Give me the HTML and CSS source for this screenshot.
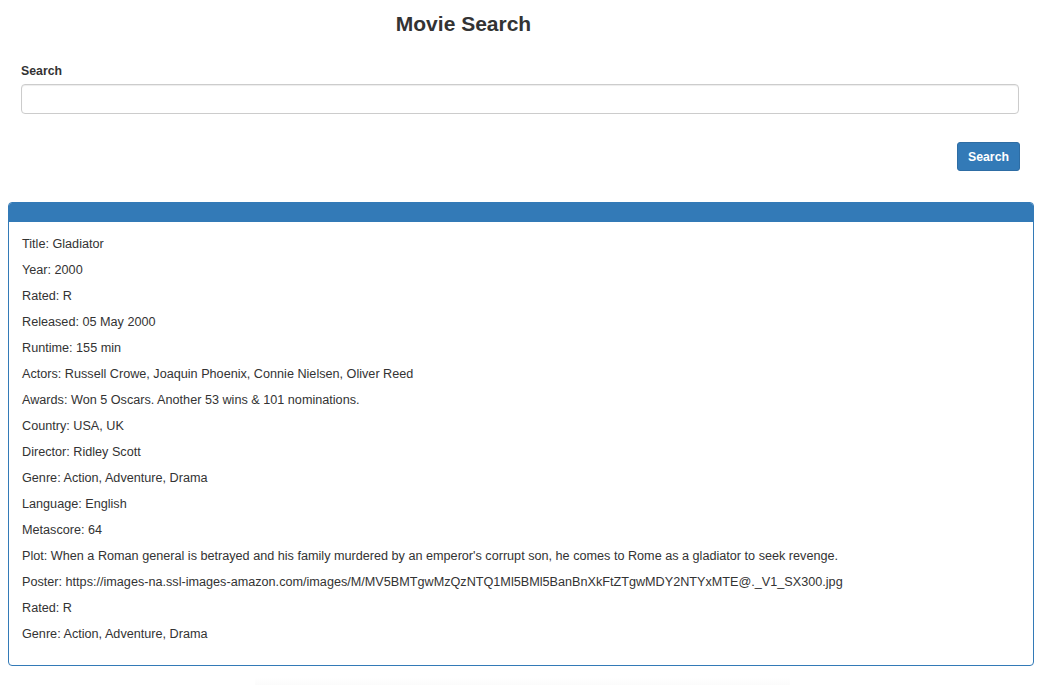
FILE: index.html
```html
<!DOCTYPE html>
<html lang="en">
<head>
<meta charset="utf-8">
<title>Movie Search</title>
<link rel="stylesheet" href="styles.css">
</head>
<body>
<header class="page-header">
  <h1 class="page-title">Movie Search</h1>
</header>
<form class="search-form">
  <label class="search-label" for="q">Search</label>
  <input class="search-input" id="q" type="text">
  <div class="actions">
    <button class="btn-primary" type="button">Search</button>
  </div>
</form>
<section class="panel">
  <div class="panel-heading"></div>
  <div class="panel-body">
    <p>Title: Gladiator</p>
    <p>Year: 2000</p>
    <p>Rated: R</p>
    <p>Released: 05 May 2000</p>
    <p>Runtime: 155 min</p>
    <p>Actors: Russell Crowe, Joaquin Phoenix, Connie Nielsen, Oliver Reed</p>
    <p>Awards: Won 5 Oscars. Another 53 wins &amp; 101 nominations.</p>
    <p>Country: USA, UK</p>
    <p>Director: Ridley Scott</p>
    <p>Genre: Action, Adventure, Drama</p>
    <p>Language: English</p>
    <p>Metascore: 64</p>
    <p>Plot: When a Roman general is betrayed and his family murdered by an emperor's corrupt son, he comes to Rome as a gladiator to seek revenge.</p>
    <p>Poster: https://images-na.ssl-images-amazon.com/images/M/MV5BMTgwMzQzNTQ1Ml5BMl5BanBnXkFtZTgwMDY2NTYxMTE@._V1_SX300.jpg</p>
    <p>Rated: R</p>
    <p>Genre: Action, Adventure, Drama</p>
  </div>
</section>
<div class="fade-shadow"></div>
</body>
</html>
```
FILE: styles.css
```css
html, body {
  margin: 0;
  padding: 0;
  background: #fff;
}
body {
  font-family: "Liberation Sans", Arial, Helvetica, sans-serif;
  color: #333;
  font-size: 12.6px;
  overflow: hidden;
}
.page-header {
  width: 927px;
  text-align: center;
  padding-top: 12px;
}
.page-title {
  margin: 0;
  font-size: 21px;
  line-height: 23px;
  font-weight: bold;
  color: #333;
}
.search-form {
  margin: 0 0 0 21px;
  width: 999px;
  padding-top: 29px;
}
.search-label {
  display: block;
  font-weight: bold;
  font-size: 12.3px;
  line-height: 15px;
  margin-bottom: 5px;
}
.search-input {
  display: block;
  box-sizing: border-box;
  width: 998px;
  height: 30px;
  border: 1px solid #ccc;
  border-radius: 4px;
  box-shadow: inset 0 1px 1px rgba(0,0,0,0.075);
  margin: 0;
  padding: 5px 10px;
  font: inherit;
}
.actions {
  display: flex;
  justify-content: flex-end;
  margin-top: 28px;
}
.btn-primary {
  box-sizing: border-box;
  width: 63px;
  height: 29px;
  background: #337ab7;
  border: 1px solid #2e6da4;
  border-radius: 3px;
  color: #fff;
  font-family: "Liberation Sans", Arial, sans-serif;
  font-size: 12.3px;
  font-weight: bold;
  padding: 0;
}
.panel {
  box-sizing: border-box;
  margin: 31px 0 0 8px;
  width: 1026px;
  border: 1px solid #337ab7;
  border-radius: 4px;
  overflow: hidden;
}
.panel-heading {
  height: 19px;
  background: #337ab7;
}
.panel-body {
  padding: 14px 13px 13px;
}
.panel-body p {
  margin: 0 0 9px;
  line-height: 17px;
  font-size: 12.65px;
  white-space: nowrap;
}
.fade-shadow {
  margin: 11px 0 0 255px;
  width: 535px;
  height: 12px;
  background: linear-gradient(#fff, #f9f9f9);
}
```
